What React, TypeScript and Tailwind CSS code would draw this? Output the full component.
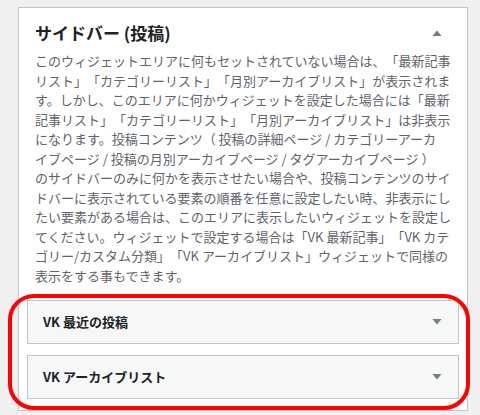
const lines = [
  "このウィジェットエリアに何もセットされていない場合は、「最新記事",
  "リスト」「カテゴリーリスト」「月別アーカイブリスト」が表示されま",
  "す。しかし、このエリアに何かウィジェットを設定した場合には「最新",
  "記事リスト」「カテゴリーリスト」「月別アーカイブリスト」は非表示",
  "になります。投稿コンテンツ（ 投稿の詳細ページ / カテゴリーアーカ",
  "イブページ / 投稿の月別アーカイブページ / タグアーカイブページ ）",
  "のサイドバーのみに何かを表示させたい場合や、投稿コンテンツのサイ",
  "ドバーに表示されている要素の順番を任意に設定したい時、非表示にし",
  "たい要素がある場合は、このエリアに表示したいウィジェットを設定し",
  "てください。ウィジェットで設定する場合は「VK 最新記事」「VK カテ",
  "ゴリー/カスタム分類」「VK アーカイブリスト」ウィジェットで同様の",
  "表示をする事もできます。",
];

function Caret({ up }: { up?: boolean }) {
  return (
    <svg width="10" height="6" viewBox="0 0 10 6" className="shrink-0">
      {up ? (
        <polygon points="0.5,6 9.5,6 5,0.5" fill="#787c82" />
      ) : (
        <polygon points="0.5,0 9.5,0 5,5.5" fill="#787c82" />
      )}
    </svg>
  );
}

function WidgetRow({ title }: { title: string }) {
  return (
    <div className="mx-2 h-[44px] border border-[#c3c4c7] bg-[#f6f7f7] flex items-center justify-between pl-[15px] pr-[16px]">
      <span className="text-[13px] font-semibold text-[#1d2327]">{title}</span>
      <Caret />
    </div>
  );
}

export default function App() {
  return (
    <div
      className="relative h-[415px] w-[480px] overflow-hidden bg-[#f0f0f1] pt-[7px] pl-[18px] [text-spacing-trim:space-all]"
      style={{ fontFamily: '"Noto Sans CJK JP", "Noto Sans", sans-serif' }}
    >
      <div className="w-[450px] h-[404px] border border-[#c3c4c7] bg-white">
        {/* Header */}
        <div className="flex items-center justify-between pl-4 pr-[25px] pt-[13px]">
          <h2 className="text-[17px] leading-[24px] font-bold text-[#1d2327]">サイドバー (投稿)</h2>
          <Caret up />
        </div>

        {/* Description */}
        <p className="mt-[6px] px-4 text-[13px] leading-[19.5px] text-[#5f646a]">
          {lines.map((l, i) => (
            <span key={i} className="block whitespace-nowrap">
              {l}
            </span>
          ))}
        </p>

        {/* Widgets */}
        <div className="mt-[15px] flex flex-col gap-[11px]">
          <WidgetRow title="VK 最近の投稿" />
          <WidgetRow title="VK アーカイブリスト" />
        </div>
      </div>

      {/* Red annotation ring */}
      <div className="absolute left-[8px] top-[294px] w-[462px] h-[116px] rounded-[26px] border-4 border-[#f00]" />
    </div>
  );
}
